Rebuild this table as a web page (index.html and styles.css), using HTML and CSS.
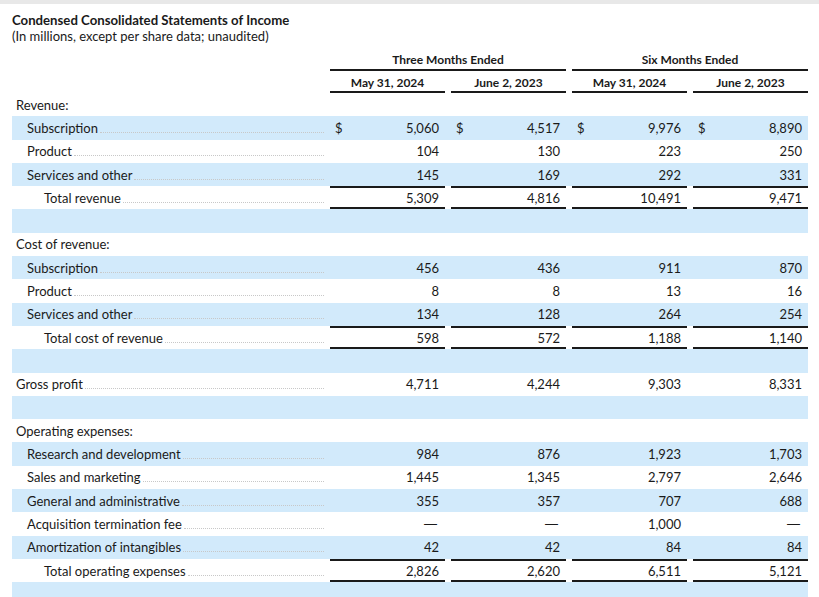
FILE: index.html
```html
<!DOCTYPE html>
<html>
<head>
<meta charset="utf-8">
<link rel="stylesheet" href="styles.css">
</head>
<body>
<div class="topbar"></div>
<div class="page">
  <div class="title">Condensed Consolidated Statements of Income</div>
  <div class="subtitle">(In millions, except per share data; unaudited)</div>

  <div class="grid head1">
    <div></div>
    <div class="grp">Three Months Ended</div>
    <div class="grp">Six Months Ended</div>
  </div>
  <div class="grid head2">
    <div></div>
    <div class="dt">May 31, 2024</div>
    <div class="dt">June 2, 2023</div>
    <div class="dt">May 31, 2024</div>
    <div class="dt">June 2, 2023</div>
  </div>

  <div class="grid row"><div class="lbl l0">Revenue:</div><div></div><div></div><div></div><div></div></div>
  <div class="grid row band"><div class="lbl l1"><span>Subscription</span><i class="dots"></i></div><div class="v"><span>$</span><span>5,060</span></div><div class="v"><span>$</span><span>4,517</span></div><div class="v"><span>$</span><span>9,976</span></div><div class="v"><span>$</span><span>8,890</span></div></div>
  <div class="grid row"><div class="lbl l1"><span>Product</span><i class="dots"></i></div><div class="v"><span></span><span>104</span></div><div class="v"><span></span><span>130</span></div><div class="v"><span></span><span>223</span></div><div class="v"><span></span><span>250</span></div></div>
  <div class="grid row band"><div class="lbl l1"><span>Services and other</span><i class="dots"></i></div><div class="v"><span></span><span>145</span></div><div class="v"><span></span><span>169</span></div><div class="v"><span></span><span>292</span></div><div class="v"><span></span><span>331</span></div></div>
  <div class="grid row total"><div class="lbl l2"><span>Total revenue</span><i class="dots"></i></div><div class="v"><span></span><span>5,309</span></div><div class="v"><span></span><span>4,816</span></div><div class="v"><span></span><span>10,491</span></div><div class="v"><span></span><span>9,471</span></div></div>
  <div class="grid row band"></div>

  <div class="grid row"><div class="lbl l0">Cost of revenue:</div><div></div><div></div><div></div><div></div></div>
  <div class="grid row band"><div class="lbl l1"><span>Subscription</span><i class="dots"></i></div><div class="v"><span></span><span>456</span></div><div class="v"><span></span><span>436</span></div><div class="v"><span></span><span>911</span></div><div class="v"><span></span><span>870</span></div></div>
  <div class="grid row"><div class="lbl l1"><span>Product</span><i class="dots"></i></div><div class="v"><span></span><span>8</span></div><div class="v"><span></span><span>8</span></div><div class="v"><span></span><span>13</span></div><div class="v"><span></span><span>16</span></div></div>
  <div class="grid row band"><div class="lbl l1"><span>Services and other</span><i class="dots"></i></div><div class="v"><span></span><span>134</span></div><div class="v"><span></span><span>128</span></div><div class="v"><span></span><span>264</span></div><div class="v"><span></span><span>254</span></div></div>
  <div class="grid row total"><div class="lbl l2"><span>Total cost of revenue</span><i class="dots"></i></div><div class="v"><span></span><span>598</span></div><div class="v"><span></span><span>572</span></div><div class="v"><span></span><span>1,188</span></div><div class="v"><span></span><span>1,140</span></div></div>
  <div class="grid row band"></div>

  <div class="grid row"><div class="lbl l0"><span>Gross profit</span><i class="dots"></i></div><div class="v"><span></span><span>4,711</span></div><div class="v"><span></span><span>4,244</span></div><div class="v"><span></span><span>9,303</span></div><div class="v"><span></span><span>8,331</span></div></div>
  <div class="grid row band"></div>

  <div class="grid row"><div class="lbl l0">Operating expenses:</div><div></div><div></div><div></div><div></div></div>
  <div class="grid row band"><div class="lbl l1"><span>Research and development</span><i class="dots"></i></div><div class="v"><span></span><span>984</span></div><div class="v"><span></span><span>876</span></div><div class="v"><span></span><span>1,923</span></div><div class="v"><span></span><span>1,703</span></div></div>
  <div class="grid row"><div class="lbl l1"><span>Sales and marketing</span><i class="dots"></i></div><div class="v"><span></span><span>1,445</span></div><div class="v"><span></span><span>1,345</span></div><div class="v"><span></span><span>2,797</span></div><div class="v"><span></span><span>2,646</span></div></div>
  <div class="grid row band"><div class="lbl l1"><span>General and administrative</span><i class="dots"></i></div><div class="v"><span></span><span>355</span></div><div class="v"><span></span><span>357</span></div><div class="v"><span></span><span>707</span></div><div class="v"><span></span><span>688</span></div></div>
  <div class="grid row"><div class="lbl l1"><span>Acquisition termination fee</span><i class="dots"></i></div><div class="v"><span></span><span class="dash">—</span></div><div class="v"><span></span><span class="dash">—</span></div><div class="v"><span></span><span>1,000</span></div><div class="v"><span></span><span class="dash">—</span></div></div>
  <div class="grid row band"><div class="lbl l1"><span>Amortization of intangibles</span><i class="dots"></i></div><div class="v"><span></span><span>42</span></div><div class="v"><span></span><span>42</span></div><div class="v"><span></span><span>84</span></div><div class="v"><span></span><span>84</span></div></div>
  <div class="grid row total"><div class="lbl l2"><span>Total operating expenses</span><i class="dots"></i></div><div class="v"><span></span><span>2,826</span></div><div class="v"><span></span><span>2,620</span></div><div class="v"><span></span><span>6,511</span></div><div class="v"><span></span><span>5,121</span></div></div>
  <div class="grid row band"></div>
</div>
</body>
</html>
```

FILE: styles.css
```css
html, body {
  margin: 0;
  padding: 0;
  background: #ffffff;
}
body {
  font-family: Lato, "Open Sans", "Liberation Sans", sans-serif;
  font-size: 13px;
  color: #1a1a1a;
  overflow: hidden;
}
.topbar {
  height: 4px;
  background: #e8e8e8;
}
.page {
  width: 796px;
  padding-left: 12px;
}
.title {
  margin-top: 8px;
  font-weight: 700;
  font-size: 13.2px;
  line-height: 16px;
}
.subtitle {
  line-height: 16px;
}
.grid {
  display: grid;
  grid-template-columns: 312px 115px 115px 115px 115px;
  column-gap: 6px;
}
.head1 {
  margin-top: 6px;
  grid-template-columns: 312px 236px 236px;
}
.grp {
  text-align: center;
  font-weight: 700;
  font-size: 12px;
  line-height: 19px;
  border-bottom: 2px solid #1a1a1a;
}
.dt {
  text-align: center;
  font-weight: 700;
  font-size: 12px;
  line-height: 17px;
  padding-top: 3px;
  border-bottom: 2px solid #1a1a1a;
}
.row {
  height: 23.3px;
  align-items: stretch;
}
.band {
  background: #d2eafb;
}
.lbl {
  display: flex;
  align-items: center;
  white-space: nowrap;
}
.l0 { padding-left: 4px; }
.l1 { padding-left: 15px; }
.l2 { padding-left: 32px; }
.dots {
  flex: 1;
  align-self: center;
  height: 0;
  margin: 9px 0 0 2px;
  border-bottom: 1px dotted #c8c8c8;
}
.v {
  display: flex;
  justify-content: space-between;
  align-items: center;
  padding: 0 6px 0 5px;
  box-sizing: border-box;
}
.dash {
  font-family: "Liberation Sans", sans-serif;
  padding-right: 2px;
}
.total .v {
  border-top: 2px solid #1a1a1a;
  border-bottom: 2px solid #1a1a1a;
}
```
